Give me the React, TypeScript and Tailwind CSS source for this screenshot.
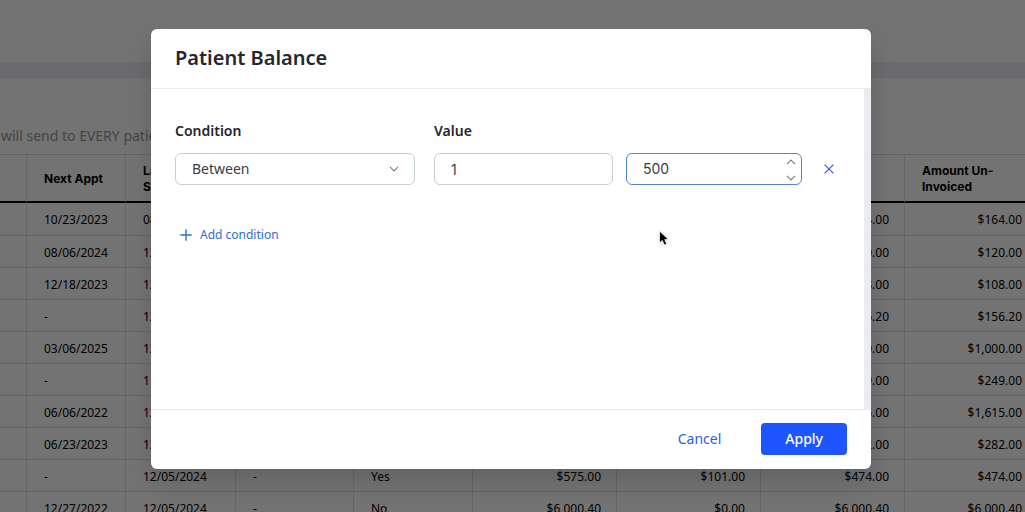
import React, { useState } from 'react';

const columns = [
  { label: '', width: 'w-[27px]' },
  { label: 'Next Appt', width: 'w-[99px]' },
  { label: 'Last Statement', width: 'w-[110px]' },
  { label: 'Last Payment', width: 'w-[118px]' },
  { label: 'Insured', width: 'w-[119px]' },
  { label: 'Patient Balance', width: 'w-[144px]' },
  { label: 'Insurance Balance', width: 'w-[144px]' },
  { label: 'Total Balance', width: 'w-[144px]' },
  { label: 'Amount Un-Invoiced', width: '' },
];

const rows = [
  ['', '10/23/2023', '08/05/2024', '-', 'Yes', '$164.00', '$0.00', '$164.00', '$164.00'],
  ['', '08/06/2024', '12/05/2024', '-', 'Yes', '$120.00', '$0.00', '$120.00', '$120.00'],
  ['', '12/18/2023', '12/05/2024', '-', 'Yes', '$108.00', '$0.00', '$108.00', '$108.00'],
  ['', '-', '12/05/2024', '-', 'Yes', '$156.20', '$0.00', '$156.20', '$156.20'],
  ['', '03/06/2025', '12/05/2024', '-', 'No', '$1,000.00', '$0.00', '$1,000.00', '$1,000.00'],
  ['', '-', '11/05/2024', '-', 'No', '$249.00', '$0.00', '$249.00', '$249.00'],
  ['', '06/06/2022', '12/05/2024', '-', 'No', '$1,615.00', '$0.00', '$1,615.00', '$1,615.00'],
  ['', '06/23/2023', '12/05/2024', '-', 'Yes', '$282.00', '$0.00', '$282.00', '$282.00'],
  ['', '-', '12/05/2024', '-', 'Yes', '$575.00', '$101.00', '$474.00', '$474.00'],
  ['', '12/27/2022', '12/05/2024', '-', 'No', '$6,000.40', '$0.00', '$6,000.40', '$6,000.40'],
];

const Chevron = ({ className = '' }: { className?: string }) => (
  <svg className={className} width="10" height="6" viewBox="0 0 10 6" fill="none" stroke="currentColor" strokeWidth="1.1">
    <path d="M1 0.8 5 5 9 0.8" />
  </svg>
);

const PatientTable = () => (
  <div className="h-screen overflow-hidden bg-white">
    <div className="h-[62px]" />
    <div className="h-4 bg-[#eeeef7]" />
    <div className="flex h-[76px] items-end pb-2">
      <p className="pl-px text-sm leading-5 text-[#999999]">will send to EVERY patient</p>
    </div>
    <table className="w-full min-w-[1038px] table-fixed border-separate border-spacing-0 text-xs text-black">
      <thead>
        <tr className="h-[49px]">
          {columns.map((col, i) => (
            <th
              key={col.label}
              className={`${col.width} border-t border-r border-b-2 border-t-[#dcdcdc] border-r-[#e4e4e4] border-b-black pt-px pb-0 text-left font-['Inter',sans-serif] text-xs leading-4 font-bold ${i > 0 ? 'pr-4 pl-[17px]' : 'px-0'}`}
            >
              {col.label}
            </th>
          ))}
        </tr>
      </thead>
      <tbody>
        {rows.map((row, i) => (
          <tr key={i} className={i === 0 ? 'h-[33px]' : 'h-8'}>
            {row.map((cell, j) => (
              <td
                key={j}
                className={`border-r border-b border-r-[#e4e4e4] border-b-[#d2d2d2] pt-0.5 pb-0 leading-4 ${j > 0 ? 'pr-[15px] pl-[17px]' : 'px-0'} ${j > 4 ? 'text-right' : 'text-left'}`}
              >
                {cell}
              </td>
            ))}
          </tr>
        ))}
      </tbody>
    </table>
  </div>
);

const BalanceModal = () => {
  const [condition, setCondition] = useState('Between');
  const [from, setFrom] = useState('1');
  const [to, setTo] = useState('500');

  const step = (amount: number) => setTo(String(Number(to) + amount));

  return (
    <div
      role="dialog"
      aria-modal="true"
      aria-labelledby="modal-title"
      className="w-full max-w-[720px] overflow-hidden rounded-md bg-white text-[#25262f] shadow-[0_12px_24px_rgba(0,0,0,0.14)]"
    >
      <header className="flex h-[60px] items-center border-b border-[#e9eaec] px-6 pb-0.5">
        <h2 id="modal-title" className="text-xl font-semibold">
          Patient Balance
        </h2>
      </header>

      <div className="flex h-80">
        <div className="flex-1 px-6 pt-8">
          <div className="flex items-end">
            <div className="flex w-60 flex-col gap-3">
              <label htmlFor="condition" className="text-sm leading-5 font-semibold">
                Condition
              </label>
              <div className="relative">
                <select
                  id="condition"
                  value={condition}
                  onChange={(e) => setCondition(e.target.value)}
                  className="block h-8 w-full appearance-none rounded-md border border-[#c5ced3] bg-white px-4 text-sm text-[#3a3b44] outline-none"
                >
                  <option>Between</option>
                  <option>Equals</option>
                  <option>Greater than</option>
                  <option>Less than</option>
                </select>
                <Chevron className="pointer-events-none absolute top-[13px] right-4 text-[#7b7f84]" />
              </div>
            </div>

            <div className="ml-[19px] flex flex-col gap-3">
              <label htmlFor="value-from" className="text-sm leading-5 font-semibold">
                Value
              </label>
              <div className="flex gap-[13px] font-['Inter',sans-serif] text-sm text-[#3a3b44]">
                <input
                  id="value-from"
                  inputMode="numeric"
                  value={from}
                  onChange={(e) => setFrom(e.target.value)}
                  className="h-8 w-[179px] rounded-md border border-[#c5ced3] px-4 outline-none"
                />
                <div className="flex h-8 w-44 rounded-md border border-[#5384d2]">
                  <input
                    aria-label="Value to"
                    inputMode="numeric"
                    value={to}
                    onChange={(e) => setTo(e.target.value)}
                    className="min-w-0 flex-1 bg-transparent pl-4 outline-none"
                  />
                  <div className="flex flex-col justify-between pt-[5px] pb-[3px] pr-[5px] text-[#7b7f84]">
                    <button type="button" aria-label="Increase" onClick={() => step(1)}>
                      <Chevron className="rotate-180" />
                    </button>
                    <button type="button" aria-label="Decrease" onClick={() => step(-1)}>
                      <Chevron />
                    </button>
                  </div>
                </div>
              </div>
            </div>

            <button type="button" aria-label="Remove condition" className="ml-4 flex h-8 items-center px-[6px] text-[#3a63d0]">
              <svg width="10" height="10" viewBox="0 0 10 10" stroke="currentColor" strokeWidth="1.3">
                <path d="M0.6 0.6 9.4 9.4M9.4 0.6 0.6 9.4" />
              </svg>
            </button>
          </div>

          <button type="button" className="mt-10 flex items-center gap-2 pl-[5px] text-xs leading-5 text-[#2f6cd6]">
            <svg width="12" height="12" viewBox="0 0 12 12" stroke="currentColor" strokeWidth="1.4">
              <path d="M6 0.3V11.7M0.3 6H11.7" />
            </svg>
            Add condition
          </button>
        </div>
        <div className="w-2 bg-[#ebecf2]" />
      </div>

      <footer className="flex h-[60px] items-center justify-end gap-6 border-t border-[#e9eaec] px-6 pb-0.5">
        <button type="button" className="px-4 text-sm text-[#2b60d8]">
          Cancel
        </button>
        <button type="button" className="h-8 rounded bg-[#1f55ff] px-6 text-sm font-medium text-white">
          Apply
        </button>
      </footer>
    </div>
  );
};

const Cursor = () => (
  <svg className="pointer-events-none absolute top-[230px] left-[658px] drop-shadow-sm" width="12" height="17" viewBox="0 0 12 17">
    <path
      d="M1.5 1V13L4.3 10.4 6.2 15 8.7 14 6.8 9.6H10.5Z"
      fill="#000"
      stroke="#fff"
      strokeWidth="0.8"
      strokeLinejoin="round"
    />
  </svg>
);

const App = () => {
  return (
    <div className="relative h-screen overflow-hidden font-['Noto_Sans',sans-serif]">
      <PatientTable />
      <div className="absolute inset-0 flex items-start justify-center bg-black/55 pt-[29px] pr-[3px]">
        <BalanceModal />
      </div>
      <Cursor />
    </div>
  );
};

export default App;
